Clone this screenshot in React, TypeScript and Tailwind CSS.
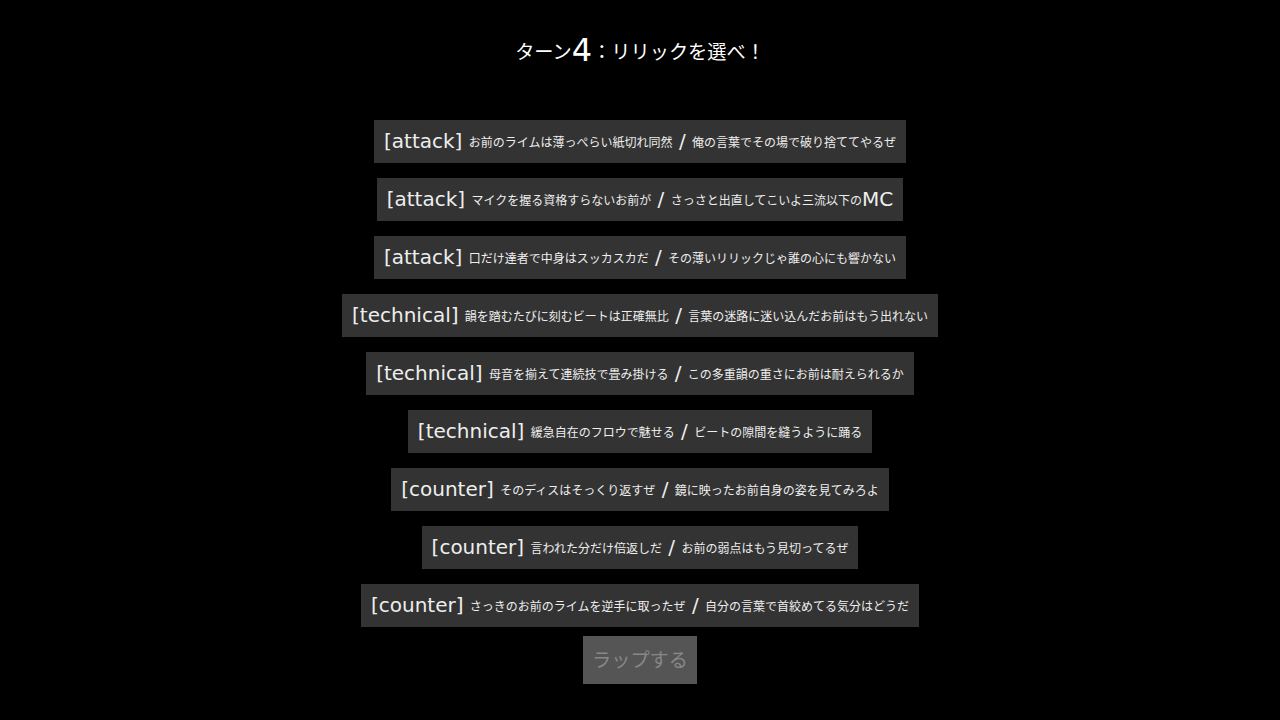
import React from "react";

type Move = { kind: string; a: string; b: string; tail?: string };

const moves: Move[] = [
  { kind: "attack", a: "お前のライムは薄っぺらい紙切れ同然", b: "俺の言葉でその場で破り捨ててやるぜ" },
  { kind: "attack", a: "マイクを握る資格すらないお前が", b: "さっさと出直してこいよ三流以下の", tail: "MC" },
  { kind: "attack", a: "口だけ達者で中身はスッカスカだ", b: "その薄いリリックじゃ誰の心にも響かない" },
  { kind: "technical", a: "韻を踏むたびに刻むビートは正確無比", b: "言葉の迷路に迷い込んだお前はもう出れない" },
  { kind: "technical", a: "母音を揃えて連続技で畳み掛ける", b: "この多重韻の重さにお前は耐えられるか" },
  { kind: "technical", a: "緩急自在のフロウで魅せる", b: "ビートの隙間を縫うように踊る" },
  { kind: "counter", a: "そのディスはそっくり返すぜ", b: "鏡に映ったお前自身の姿を見てみろよ" },
  { kind: "counter", a: "言われた分だけ倍返しだ", b: "お前の弱点はもう見切ってるぜ" },
  { kind: "counter", a: "さっきのお前のライムを逆手に取ったぜ", b: "自分の言葉で首絞めてる気分はどうだ" },
];

function Jp({ children }: { children: React.ReactNode }) {
  return (
    <span className="text-[0.6em] leading-none align-[0.1em] [font-family:'Noto_Sans_CJK_JP','Noto_Sans_CJK_SC',sans-serif]">
      {children}
    </span>
  );
}

export default function App() {
  return (
    <div className="min-h-[720px] w-full bg-black flex flex-col items-center [font-family:'DejaVu_Sans','Noto_Sans_CJK_JP',sans-serif]">
      <h1 className="mt-[32px] h-[37px] text-[32px] leading-[37px] font-normal text-white whitespace-nowrap">
        <Jp>ターン</Jp>4<Jp>：リリックを選べ！</Jp>
      </h1>
      <div className="mt-[51px] flex flex-col items-center gap-[15px]">
        {moves.map((m, i) => (
          <div
            key={i}
            className="h-[43px] bg-[#333333] px-[10px] py-[10px] text-[20px] leading-[23px] text-[#eeeeee] whitespace-nowrap"
          >
            [{m.kind}] <Jp>{m.a}</Jp> / <Jp>{m.b}</Jp>
            {m.tail}
          </div>
        ))}
      </div>
      <button className="mt-[9px] h-[48px] px-[9px] bg-[#555555] text-[32px] leading-[37px] text-[#888888] flex items-center whitespace-nowrap">
        <Jp>ラップする</Jp>
      </button>
    </div>
  );
}
